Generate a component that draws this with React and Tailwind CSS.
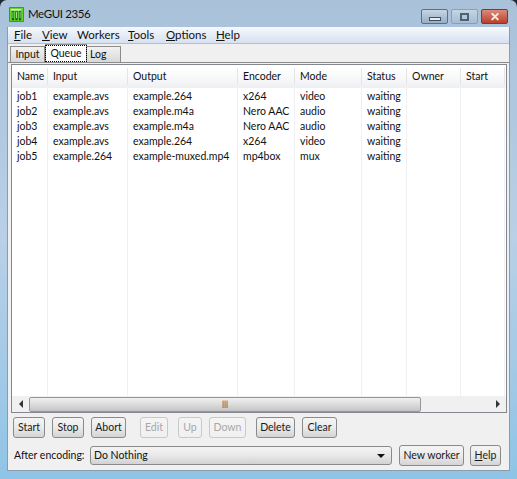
import React from 'react';

const columns = [
  { name: 'Name', w: 'w-[36px]' },
  { name: 'Input', w: 'w-[80px]' },
  { name: 'Output', w: 'w-[110px]' },
  { name: 'Encoder', w: 'w-[57px]' },
  { name: 'Mode', w: 'w-[67px]' },
  { name: 'Status', w: 'w-[45px]' },
  { name: 'Owner', w: 'w-[54px]' },
  { name: 'Start', w: 'w-[44px]' },
];

const jobs = [
  ['job1', 'example.avs', 'example.264', 'x264', 'video', 'waiting'],
  ['job2', 'example.avs', 'example.m4a', 'Nero AAC', 'audio', 'waiting'],
  ['job3', 'example.avs', 'example.m4a', 'Nero AAC', 'audio', 'waiting'],
  ['job4', 'example.avs', 'example.264', 'x264', 'video', 'waiting'],
  ['job5', 'example.264', 'example-muxed.mp4', 'mp4box', 'mux', 'waiting'],
];

const Btn = ({ w, disabled, children }) => (
  <button
    className={`${w} h-[21px] shrink-0 rounded-[3px] border flex items-center justify-center bg-gradient-to-b ${
      disabled
        ? 'border-[#c9c9c9] from-[#f4f4f4] to-[#f0f0f0] text-[#a8a8a8]'
        : 'border-[#8a8a8a] from-[#f4f4f4] via-[#ebebeb] to-[#d4d4d4] text-[#1a1a1a]'
    }`}
  >
    {children}
  </button>
);

export default function App() {
  return (
    <div className="w-[517px] h-[479px] overflow-hidden bg-[#1c2a33] font-['Lato',sans-serif] text-[10.5px] leading-none text-[#111]">
      <div className="h-full rounded-t-[7px] bg-gradient-to-b from-[#a9c2da] via-[#b9d0e6] to-[#8fc4e6] px-[3px] pt-[1px]">
        {/* title bar */}
        <div className="h-[26px] flex items-center pl-[6px] pr-[6px]">
          <svg width="15" height="15" viewBox="0 0 16 16" className="shrink-0">
            <rect width="16" height="16" rx="1" fill="#2f9e18" />
            <rect x="1" y="1" width="14" height="14" fill="#5fd82a" />
            <path d="M3 14V4h2.4v10M6.8 14V4h2.4v10M10.6 14V4H13v10" fill="#0f5c0a" />
            <path d="M2 3h11" stroke="#f2ffe8" strokeWidth="1.4" />
            <path d="M4.2 5v7M8 5v7M11.8 5v7" stroke="#d8ffc4" strokeWidth="0.8" />
          </svg>
          <span className="ml-[4px] text-[11.5px] tracking-[-0.4px] text-[#111]">MeGUI 2356</span>
          <div className="ml-auto flex items-start self-start mt-[8px] gap-[3px]">
            <div className="w-[27px] h-[15px] rounded-[2px] border border-[#5d7184] bg-gradient-to-b from-[#c6d5e4] to-[#96aec6] flex items-end justify-center pb-[2px]">
              <div className="w-[12px] h-[4px] bg-[#e4ebf2] border border-[#3e4f60]" />
            </div>
            <div className="w-[27px] h-[15px] rounded-[2px] border border-[#8aa0b6] bg-gradient-to-b from-[#c6d5e4] to-[#a5bcd3] flex items-center justify-center">
              <div className="w-[9px] h-[8px] border-2 border-[#4f6274] bg-[#b5c8da]" />
            </div>
            <div className="w-[27px] h-[15px] rounded-[2px] border border-[#7d3a30] bg-gradient-to-b from-[#dc8a78] to-[#b93d2c] flex items-center justify-center text-[12px] font-bold text-[#f3efec]">
              ✕
            </div>
          </div>
        </div>

        <div className="mx-[4px] h-[444px] flex flex-col border border-[#8d9cab] border-t-0 bg-[#f0f0f0]">
          {/* menu */}
          <div className="h-[17px] shrink-0 flex items-center pl-[6px] text-[11.5px] text-[#111] bg-gradient-to-b from-[#f6f9fd] to-[#d7e1f0] border-b border-[#b5bfcc]">
            <span className="w-[28px]"><u>F</u>ile</span>
            <span className="w-[35px]"><u>V</u>iew</span>
            <span className="w-[51px]">Workers</span>
            <span className="w-[38px]"><u>T</u>ools</span>
            <span className="w-[50px]"><u>O</u>ptions</span>
            <span><u>H</u>elp</span>
          </div>

          {/* tabs */}
          <div className="h-[18px] shrink-0 flex items-end pl-[2px]">
            <div className="w-[35px] h-[16px] flex items-center justify-center border border-b-0 border-[#8c8c8c] bg-gradient-to-b from-[#f2f2f2] to-[#d8d8d8]">Input</div>
            <div className="w-[42px] h-[18px] flex items-center justify-center border border-b-0 border-[#8c8c8c] bg-white">
              <span className="px-[4px] py-[2px] border border-dotted border-black">Queue</span>
            </div>
            <div className="w-[34px] h-[16px] flex items-center pl-[3px] border border-b-0 border-l-0 border-[#8c8c8c] bg-gradient-to-b from-[#f2f2f2] to-[#d8d8d8]">Log</div>
          </div>

          {/* queue page */}
          <div className="flex-1 flex flex-col border-t border-[#8c8c8c] pl-[3px] pr-[2px]">
            <div className="h-[349px] shrink-0 mt-[1px] flex flex-col border border-[#828790] bg-white">
              <div className="h-[20px] mt-[3px] shrink-0 flex items-center bg-gradient-to-b from-white to-[#f2f3f5] border-b-[3px] border-[#eef0f3]">
                {columns.map((c) => (
                  <div key={c.name} className={`${c.w} shrink-0 h-full flex items-center pl-[5px] border-r border-[#e3e5e8]`}>{c.name}</div>
                ))}
              </div>
              <div className="flex-1 relative pt-[1px]">
                <div className="absolute inset-0 flex">
                  {columns.map((c) => (
                    <div key={c.name} className={`${c.w} shrink-0 border-r border-[#eef0f4]`} />
                  ))}
                </div>
                {jobs.map((row) => (
                  <div key={row[0]} className="relative h-[15px] flex items-center">
                    {row.map((cell, i) => (
                      <div key={i} className={`${columns[i].w} shrink-0 pl-[5px] whitespace-nowrap`}>{cell}</div>
                    ))}
                  </div>
                ))}
              </div>
              {/* scrollbar */}
              <div className="h-[16px] shrink-0 flex items-center bg-[#f0f0f0]">
                <div className="w-[17px] flex justify-center">
                  <div className="w-0 h-0 border-y-[4px] border-y-transparent border-r-[4px] border-r-[#333]" />
                </div>
                <div className="w-[392px] h-[15px] rounded-[2px] border border-[#979797] bg-gradient-to-b from-[#f0f0f0] via-[#dcdcdc] to-[#c4c4c4] flex items-center justify-center text-[8px] text-[#222]">
                  |||
                </div>
                <div className="flex-1 flex justify-end pr-[6px]">
                  <div className="w-0 h-0 border-y-[4px] border-y-transparent border-l-[4px] border-l-[#333]" />
                </div>
              </div>
            </div>

            {/* actions */}
            <div className="h-[21px] mt-[4px] shrink-0 flex pl-[2px]">
              <Btn w="w-[32px]">Start</Btn>
              <div className="w-[7px]" />
              <Btn w="w-[32px]">Stop</Btn>
              <div className="w-[7px]" />
              <Btn w="w-[35px]">Abort</Btn>
              <div className="w-[14px]" />
              <Btn w="w-[28px]" disabled>Edit</Btn>
              <div className="w-[10px]" />
              <Btn w="w-[24px]" disabled>Up</Btn>
              <div className="w-[7px]" />
              <Btn w="w-[37px]" disabled>Down</Btn>
              <div className="w-[10px]" />
              <Btn w="w-[39px]">Delete</Btn>
              <div className="w-[7px]" />
              <Btn w="w-[35px]">Clear</Btn>
            </div>

            {/* after encoding */}
            <div className="h-[21px] mt-[7px] shrink-0 flex items-center pl-[3px]">
              <span className="w-[76px] shrink-0 whitespace-nowrap">After encoding:</span>
              <div className="w-[302px] h-[19px] shrink-0 rounded-[3px] border border-[#8a8a8a] bg-gradient-to-b from-[#f4f4f4] via-[#e8e8e8] to-[#d2d2d2] flex items-center pl-[3px] pr-[6px]">
                <span>Do Nothing</span>
                <div className="ml-auto w-0 h-0 border-x-[4px] border-x-transparent border-t-[4px] border-t-[#111]" />
              </div>
              <div className="w-[7px] shrink-0" />
              <Btn w="w-[65px]">New worker</Btn>
              <div className="w-[6px] shrink-0" />
              <Btn w="w-[31px]"><span><u>H</u>elp</span></Btn>
            </div>
          </div>
        </div>
      </div>
    </div>
  );
}
